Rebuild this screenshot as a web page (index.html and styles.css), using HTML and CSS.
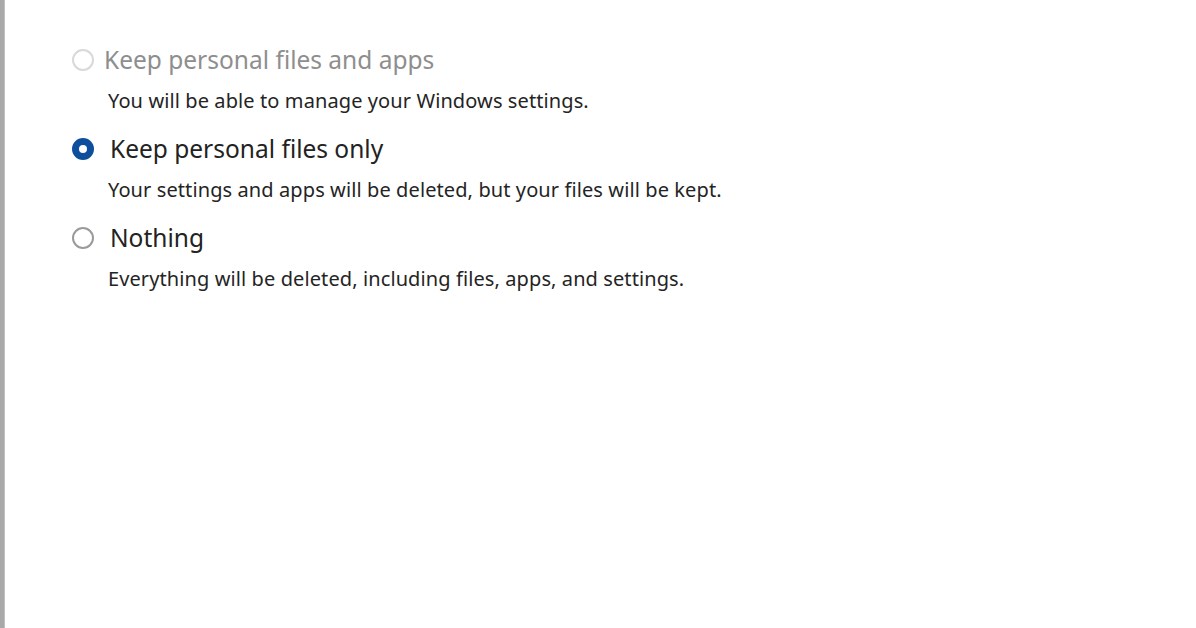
FILE: index.html
```html
<!DOCTYPE html>
<html lang="en">
<head>
<meta charset="utf-8">
<title>Reset options</title>
<link rel="stylesheet" href="styles.css">
</head>
<body>
<div class="frame">
  <div class="edge"></div>
  <main class="content">
    <div class="options">
      <div class="option disabled">
        <div class="option-head">
          <span class="radio radio-disabled"></span>
          <span class="title">Keep personal files and apps</span>
        </div>
        <div class="desc">You will be able to manage your Windows settings.</div>
      </div>
      <div class="option">
        <div class="option-head">
          <span class="radio radio-checked"></span>
          <span class="title">Keep personal files only</span>
        </div>
        <div class="desc">Your settings and apps will be deleted, but your files will be kept.</div>
      </div>
      <div class="option">
        <div class="option-head">
          <span class="radio"></span>
          <span class="title">Nothing</span>
        </div>
        <div class="desc">Everything will be deleted, including files, apps, and settings.</div>
      </div>
    </div>
  </main>
</div>
</body>
</html>
```

FILE: styles.css
```css
html, body {
  margin: 0;
  padding: 0;
  background: #ffffff;
}
body {
  font-family: "Noto Sans", "Open Sans", sans-serif;
  color: #262626;
}
.frame {
  display: flex;
  width: 1196px;
  height: 628px;
  overflow: hidden;
}
.edge {
  width: 5px;
  flex: none;
  background: linear-gradient(to right, #a9a9a9 0, #a9a9a9 4px, #d8d8d8 5px);
}
.content {
  flex: 1;
  padding: 45px 0 0 67px;
}
.options {
  display: flex;
  flex-direction: column;
  gap: 21px;
}
.option-head {
  display: flex;
  align-items: center;
  height: 30px;
}
.radio {
  width: 22px;
  height: 22px;
  box-sizing: border-box;
  border-radius: 50%;
  border: 2px solid #9a9a9a;
  flex: none;
  margin-right: 16px;
}
.radio-disabled {
  border-color: #d9d9d9;
  margin-right: 10px;
}
.radio-checked {
  border: 7px solid #0d4f9c;
}
.title {
  font-size: 24.5px;
  line-height: 30px;
  color: #222222;
}
.disabled .title {
  color: #8e8e8e;
}
.desc {
  margin-top: 14px;
  margin-left: 36px;
  font-size: 20px;
  line-height: 24px;
  color: #242424;
  letter-spacing: 0.1px;
}
```
